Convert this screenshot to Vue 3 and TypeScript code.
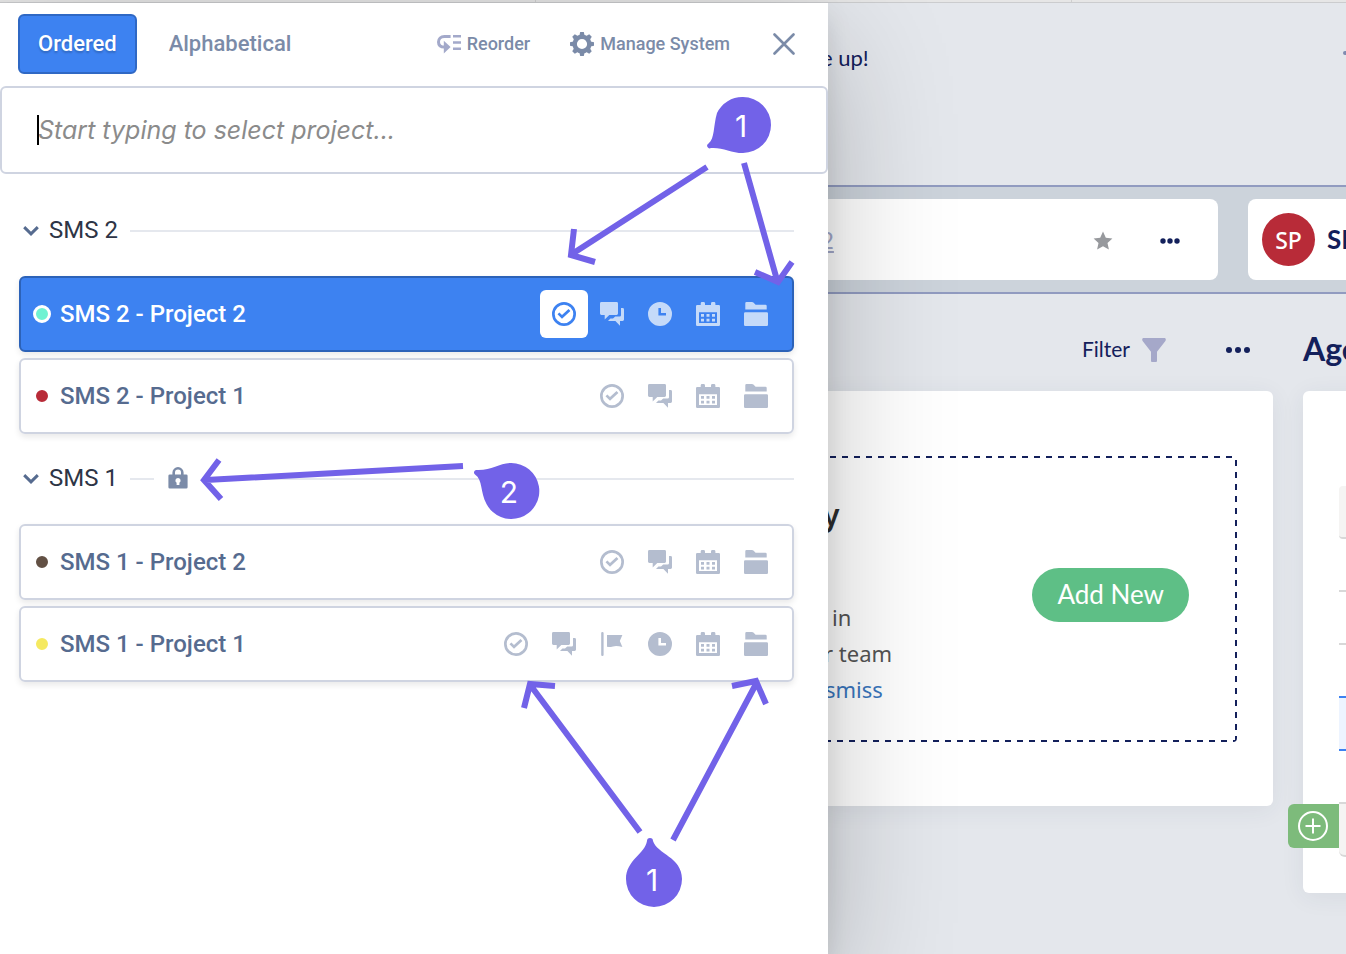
<script setup lang="ts">
import { ref } from 'vue'

type IconName = 'tasks' | 'chat' | 'flag' | 'clock' | 'calendar' | 'files'

interface Project {
  name: string
  tone: string
  active?: boolean
  tools: IconName[]
}

interface Group {
  name: string
  locked: boolean
  projects: Project[]
}

const search = ref('')

const groups: Group[] = [
  {
    name: 'SMS 2',
    locked: false,
    projects: [
      { name: 'SMS 2 - Project 2', tone: 'mint', active: true, tools: ['tasks', 'chat', 'clock', 'calendar', 'files'] },
      { name: 'SMS 2 - Project 1', tone: 'red', tools: ['tasks', 'chat', 'calendar', 'files'] },
    ],
  },
  {
    name: 'SMS 1',
    locked: true,
    projects: [
      { name: 'SMS 1 - Project 2', tone: 'brown', tools: ['tasks', 'chat', 'calendar', 'files'] },
      { name: 'SMS 1 - Project 1', tone: 'yellow', tools: ['tasks', 'chat', 'flag', 'clock', 'calendar', 'files'] },
    ],
  },
]

const iconPaths: Record<IconName, string> = {
  tasks:
    'M12 0a12 12 0 1 0 0 24a12 12 0 0 0 0-24zM12 2.7a9.3 9.3 0 1 1 0 18.6a9.3 9.3 0 0 1 0-18.6zM7.4 10.4L5.5 12.3L10 16.8L18.4 8.9L16.5 7L10 13z',
  chat:
    'M1.4 0H16.6Q18 0 18 1.4V11.6Q18 13 16.6 13H9.3L4.7 17.6V13H1.4Q0 13 0 11.6V1.4Q0 0 1.4 0zM21 6H22.6Q24 6 24 7.4V17.6Q24 19 22.6 19H20V23.8L15.4 19H8L10.4 16.6H13L15.2 14.6H19.6Q21 14.6 21 13.2z',
  flag: 'M1.2 1Q1.2 0 2.4 0Q3.6 0 3.6 1V23Q3.6 24 2.4 24Q1.2 24 1.2 23zM7 3H22.4L19.8 9L22.4 15Q17 13.6 13 14.4Q10 15.2 7 14.8z',
  clock: 'M12 0a12 12 0 1 0 0 24a12 12 0 0 0 0-24zM10.4 6H13V11H18V13.6H10.4z',
  calendar:
    'M1.2 3H4.7V1.4Q4.7 0 6 0H7.6Q9 0 9 1.4V3H15V1.4Q15 0 16.4 0H18Q19.4 0 19.4 1.4V3H22.8Q24 3 24 4.2V22.8Q24 24 22.8 24H1.2Q0 24 0 22.8V4.2Q0 3 1.2 3zM3 10.3V21H21V10.3zM5 12H8V14.8H5zM10.5 12H13.5V14.8H10.5zM16 12H19V14.8H16zM5 16.7H8V19.5H5zM10.5 16.7H13.5V19.5H10.5zM16 16.7H19V19.5H16z',
  files:
    'M1.3 7.6V1.2Q1.3 0 2.5 0H8Q8.8 0 9.4 .6L11.6 2.7H21.5Q22.7 2.7 22.7 3.9V7.6zM1.2 10.3H22.8Q24 10.3 24 11.5V22.8Q24 24 22.8 24H1.2Q0 24 0 22.8V11.5Q0 10.3 1.2 10.3z',
}

const toothAngles = [0, 45, 90, 135, 180, 225, 270, 315]
</script>

<template>
  <div class="screen">
    <div class="tabstrip"></div>
    <div class="body">
      <aside class="drawer">
        <header class="drawer-head">
          <button type="button" class="mode mode-on">Ordered</button>
          <button type="button" class="mode">Alphabetical</button>
          <div class="actions">
            <button type="button" class="action">
              <svg class="reorder" viewBox="0 0 24 20" width="24" height="20">
                <path d="M13.6 2.4H7.4C3.8 2.4 1.5 4.8 1.5 7.9C1.5 11 3.8 13 7.6 13" fill="none" stroke="currentColor" stroke-width="3" />
                <path d="M6.8 6.8L13.6 13L6.8 19.4z" fill="currentColor" />
                <path d="M16 1h8v2.6h-8zM16 7.2h8v2.6h-8zM16 13.4h8v2.6h-8z" fill="currentColor" />
              </svg>
              Reorder
            </button>
            <button type="button" class="action">
              <svg viewBox="-12 -12 24 24" width="24" height="24">
                <circle r="7.3" fill="none" stroke="currentColor" stroke-width="4.4" />
                <path v-for="a in toothAngles" :key="a" d="M-2.6 -8.6L-1.8 -12H1.8L2.6 -8.6z" :transform="`rotate(${a})`" fill="currentColor" />
              </svg>
              Manage System
            </button>
            <button type="button" class="close" aria-label="Close">
              <svg viewBox="0 0 22 22" width="22" height="22">
                <path d="M1.5 1.5L20.5 20.5M20.5 1.5L1.5 20.5" fill="none" stroke="currentColor" stroke-width="2.6" stroke-linecap="round" />
              </svg>
            </button>
          </div>
        </header>

        <div class="search">
          <input v-model="search" type="text" placeholder="Start typing to select project..." aria-label="Select project" />
          <span class="caret"></span>
        </div>

        <section v-for="group in groups" :key="group.name" class="group">
          <h2 class="group-head">
            <svg viewBox="0 0 16 10" width="16" height="10">
              <path d="M1.2 1.2L8 7.8L14.8 1.2" fill="none" stroke="#566b8f" stroke-width="3" />
            </svg>
            <span>{{ group.name }}</span>
            <template v-if="group.locked">
              <i class="rule rule-short"></i>
              <svg class="lock" viewBox="0 0 20 22" width="20" height="22">
                <path d="M5.7 9V5.6A4.3 4.3 0 0 1 14.3 5.6V9" fill="none" stroke="#7b8ba8" stroke-width="2.6" />
                <path fill-rule="evenodd" d="M1.8 7.4H18.2Q19.6 7.4 19.6 8.8V20.2Q19.6 21.6 18.2 21.6H1.8Q.4 21.6 .4 20.2V8.8Q.4 7.4 1.8 7.4zM10 11a2.6 2.6 0 0 0-1.4 4.8V18H11.4V15.8A2.6 2.6 0 0 0 10 11z" fill="#7b8ba8" />
              </svg>
            </template>
            <i class="rule"></i>
          </h2>
          <ul class="projects">
            <li v-for="project in group.projects" :key="project.name" class="project" :class="{ active: project.active }">
              <span class="dot" :class="project.tone"></span>
              <a href="#" class="name">{{ project.name }}</a>
              <span class="tools">
                <button v-for="tool in project.tools" :key="tool" type="button" class="tool" :aria-label="tool">
                  <svg viewBox="0 0 24 24" width="24" height="24">
                    <path :d="iconPaths[tool]" fill="currentColor" fill-rule="evenodd" />
                  </svg>
                </button>
              </span>
            </li>
          </ul>
        </section>

        <svg class="notes" viewBox="0 0 828 954" width="828" height="954">
          <g fill="none" stroke="#7262e8" stroke-width="6">
            <path d="M707 167L572 254M574 229L571 255L595 262" />
            <path d="M744 163L777 280M755 272L778 282L792 262" />
            <path d="M463 466L206 480M219 460L204 480L221 499" />
            <path d="M640 832L531 686M524 708L530 684L555 686" />
            <path d="M673 840L756 684M732 686L756 681L766 704" />
          </g>
          <g fill="#7262e8">
            <path d="M743 97A28 28 0 1 1 743 153C731 153 722 147 711 148A2.5 2.5 0 0 1 708.5 143.5C715 138 713 127 717 113A28 28 0 0 1 743 97z" />
            <path d="M511 463C499 463 491 471 476 470A2.5 2.5 0 0 0 475 474.5C483 480 480 492 486.5 504A28 28 0 1 0 511 463z" />
            <path d="M626 879C626 860 645 854 647 841A3 3 0 0 1 653 841C657 854 682 857 682 879A28 28 0 0 1 626 879z" />
          </g>
          <g class="note-text">
            <text x="741" y="137">1</text>
            <text x="509" y="503">2</text>
            <text x="652" y="891">1</text>
          </g>
        </svg>
      </aside>

      <main class="content">
        <div class="banner">
          <p>e up!</p>
          <svg viewBox="0 0 16 4" width="16" height="4"><path d="M2 2H14" stroke="#7f8bb0" stroke-width="4" stroke-linecap="round" /></svg>
        </div>

        <div class="band">
          <div class="crumb">
            <a href="#">2</a>
            <svg class="star" viewBox="0 0 20 20" width="20" height="20">
              <path d="M10 .6L12.8 6.8L19.4 7.5L14.5 12L15.9 18.6L10 15.2L4.1 18.6L5.5 12L.6 7.5L7.2 6.8z" fill="#97999d" />
            </svg>
            <button type="button" class="more" aria-label="More options">
              <svg viewBox="0 0 20 6" width="20" height="6"><circle cx="3" cy="3" r="2.7" /><circle cx="10" cy="3" r="2.7" /><circle cx="17" cy="3" r="2.7" /></svg>
            </button>
          </div>
          <div class="crumb crumb-next">
            <span class="avatar">SP</span>
            <strong>SM</strong>
          </div>
        </div>

        <div class="columns">
          <section class="column">
            <header class="column-head">
              <button type="button" class="filter">
                <span>Filter</span>
                <svg viewBox="0 0 24 24" width="24" height="24">
                  <path d="M1 0H23Q24.4 1 23.4 3L15 13.8V23Q15 24 14 24H10Q9 24 9 23V13.8L.6 3Q-.4 1 1 0z" fill="#a5a8c9" />
                </svg>
              </button>
              <button type="button" class="more" aria-label="More options">
                <svg viewBox="0 0 24 8" width="24" height="8"><circle cx="3" cy="4" r="3" /><circle cx="12" cy="4" r="3" /><circle cx="21" cy="4" r="3" /></svg>
              </button>
            </header>
            <div class="card card-main">
              <div class="dashed">
                <div class="intro">
                  <h3>y</h3>
                  <p class="line-in">in</p>
                  <p class="line-team">r team</p>
                  <a href="#">smiss</a>
                </div>
                <button type="button" class="add">Add New</button>
              </div>
            </div>
          </section>

          <section class="column column-next">
            <header class="column-head"><h2>Age</h2></header>
            <div class="card card-next">
              <div class="slots">
                <div class="slot slot-head"></div>
                <div class="slot"></div>
                <div class="slot"></div>
                <div class="slot slot-clear"></div>
                <div class="slot slot-on"></div>
                <div class="slot"></div>
                <div class="slot slot-foot"></div>
              </div>
              <button type="button" class="plus" aria-label="Add item">
                <svg viewBox="0 0 30 30" width="30" height="30">
                  <path d="M15 7.5V22.5M7.5 15H22.5" stroke="#fff" stroke-width="2" />
                  <circle cx="15" cy="15" r="14" fill="none" stroke="#fff" stroke-width="2" />
                </svg>
              </button>
            </div>
          </section>
        </div>
      </main>
    </div>
  </div>
</template>

<style>
body {
  margin: 0;
}
</style>

<style scoped>
* {
  box-sizing: border-box;
}
.screen {
  display: flex;
  flex-direction: column;
  min-height: 100vh;
  overflow: hidden;
  background: #e4e7ec;
  font-family: Roboto, "Liberation Sans", sans-serif;
}
h2,
h3,
p,
ul {
  margin: 0;
  padding: 0;
}
button {
  margin: 0;
  padding: 0;
  border: 0;
  background: none;
  font: inherit;
  color: inherit;
  cursor: pointer;
}
svg {
  display: block;
  flex: none;
}
.tabstrip {
  height: 3px;
  border-bottom: 1px solid #cbccce;
  background: repeating-linear-gradient(to right, #e6e6e6 0 535px, #cfcfcf 535px 536px);
}
.body {
  flex: 1;
  display: flex;
}

/* Drawer */
.drawer {
  position: relative;
  z-index: 2;
  flex: none;
  width: 828px;
  background: #fff;
  box-shadow: 0 40px 120px rgba(0, 0, 0, 0.24), 0 12px 24px rgba(0, 0, 0, 0.1);
}
.drawer-head {
  display: flex;
  align-items: center;
  height: 83px;
  padding: 0 32px 2px 18px;
  color: #7b8ba8;
}
.mode {
  height: 60px;
  padding: 0 18px;
  border: 2px solid transparent;
  border-radius: 6px;
  font-size: 22px;
  font-weight: 500;
}
.mode + .mode {
  margin-left: 12px;
}
.mode-on {
  border-color: #2f68c4;
  background: #3d82f1;
  color: #fff;
  text-shadow: 0 2px 2px rgba(0, 0, 0, 0.2);
}
.actions {
  display: flex;
  align-items: center;
  gap: 40px;
  margin-left: auto;
}
.action {
  display: flex;
  align-items: center;
  gap: 6px;
  font-size: 18px;
  font-weight: 500;
}
.reorder {
  color: #a3a9ca;
}
.close {
  padding: 1px 1px 1px 3px;
}
.search {
  position: relative;
}
.search input {
  display: block;
  width: 100%;
  height: 88px;
  padding: 0 36px;
  border: 2px solid #cfd4e1;
  border-radius: 6px;
  outline: 0;
  background: #fff;
  font: italic 25px Inter, "Liberation Sans", sans-serif;
}
.search input::placeholder {
  color: #8b8b8b;
  opacity: 1;
}
.caret {
  position: absolute;
  left: 37px;
  top: 29px;
  width: 2px;
  height: 30px;
  background: #000;
}
.group {
  padding: 0 34px 0 19px;
}
.search + .group {
  margin-top: 12px;
}
.group-head {
  display: flex;
  align-items: center;
  height: 90px;
  padding-left: 4px;
  font-size: 24px;
  font-weight: 400;
  color: #2e3546;
}
.group-head span {
  margin: 0 12px 2px 10px;
}
.rule {
  flex: 1;
  height: 2px;
  background: #e5e8ee;
}
.rule-short {
  flex: none;
  width: 24px;
}
.lock {
  margin: 0 14px 2px;
}
.projects {
  display: grid;
  gap: 6px;
  list-style: none;
}
.project {
  display: flex;
  align-items: center;
  height: 76px;
  padding: 0 12px;
  border: 2px solid #cfd4e1;
  border-radius: 6px;
  box-shadow: 0 3px 6px rgba(0, 0, 0, 0.09);
  color: #566b8f;
}
.name {
  margin-left: 9px;
  color: inherit;
  font-size: 24px;
  font-weight: 500;
  text-decoration: none;
}
.dot {
  width: 18px;
  height: 18px;
  border: 3px solid #fff;
  border-radius: 50%;
}
.mint {
  background: #6ff2d2;
}
.red {
  background: #b82b38;
}
.brown {
  background: #625044;
}
.yellow {
  background: #f5e960;
}
.tools {
  display: flex;
  margin-left: auto;
  color: #b4bdcf;
}
.tool {
  display: grid;
  place-items: center;
  width: 48px;
  height: 48px;
  border-radius: 6px;
}
.active {
  border-color: #2c62b8;
  background: #3d82f1;
  color: #fff;
}
.active .tools {
  color: #c5daf9;
}
.active .tool:first-child {
  background: #fff;
  color: #3d82f1;
}
.notes {
  position: absolute;
  left: 0;
  top: -3px;
  pointer-events: none;
}
.note-text {
  fill: #fff;
  font: 30px Inter, "Liberation Sans", sans-serif;
  text-anchor: middle;
}

/* Page behind the drawer */
.content {
  flex: 1;
  min-width: 0;
  margin-left: -8px;
  color: #13205b;
  font-family: Lato, "Liberation Sans", sans-serif;
}
.banner {
  display: flex;
  justify-content: space-between;
  height: 182px;
  padding: 41px 0 0 1px;
  font-size: 22px;
  line-height: 28px;
}
.banner svg {
  margin: 7px -13px 0 0;
}
.band {
  display: flex;
  gap: 30px;
  padding: 12px 0;
  border: solid #919bc0;
  border-width: 2px 0;
  background: #ccd3db;
}
.crumb {
  flex: none;
  display: flex;
  align-items: center;
  width: 398px;
  height: 81px;
  border-radius: 8px;
  background: #fff;
}
.crumb a {
  color: #a3a9ca;
  font-size: 24px;
}
.star {
  margin: 3px 47px 0 auto;
}
.more {
  fill: #13205b;
}
.crumb .more {
  margin: 3px 38px 0 0;
}
.crumb-next {
  flex: 1 0 140px;
  padding-left: 14px;
  border-radius: 8px 0 0 8px;
}
.avatar {
  display: grid;
  place-items: center;
  width: 53px;
  height: 53px;
  margin-right: 12px;
  border-radius: 50%;
  background: #b82b38;
  color: #fff;
  font: 500 23px "Noto Sans", sans-serif;
}
.crumb strong {
  padding-bottom: 2px;
  font-size: 26px;
}
.columns {
  display: flex;
  gap: 30px;
}
.column {
  flex: none;
  width: 453px;
}
.column-next {
  flex: 1 0 100px;
}
.column-head {
  display: flex;
  align-items: center;
  justify-content: flex-end;
  height: 97px;
  padding: 15px 23px 0 0;
}
.column-next .column-head {
  justify-content: flex-start;
}
.column-head h2 {
  padding-bottom: 4px;
  font-size: 32px;
  font-weight: 700;
}
.filter {
  display: flex;
  align-items: center;
  gap: 12px;
  margin-right: 60px;
  font-size: 21px;
}
.filter span {
  padding-bottom: 4px;
}
.card {
  border-radius: 6px;
  background: #fff;
  box-shadow: 0 4px 24px rgba(40, 60, 90, 0.07);
}
.card-main {
  padding: 65px 36px 64px 0;
}
.dashed {
  display: flex;
  align-items: center;
  justify-content: space-between;
  height: 286px;
  padding-right: 48px;
  border-radius: 4px;
  background:
    repeating-linear-gradient(to left, transparent 0 5px, #13205b 5px 11px, transparent 11px 12px) top / 100% 2px no-repeat,
    repeating-linear-gradient(to left, transparent 0 8px, #13205b 8px 14px, transparent 14px 12px) bottom / 0 0 no-repeat,
    repeating-linear-gradient(to left, #13205b 0 4px, transparent 4px 10px, #13205b 10px 12px) bottom / 100% 2px no-repeat,
    repeating-linear-gradient(to bottom, transparent 0 4px, #13205b 4px 10px, transparent 10px 12px) right / 2px 100% no-repeat;
}
.intro {
  align-self: stretch;
  padding-top: 39px;
  color: #555;
  font: 22px/36px "Noto Sans", sans-serif;
}
.intro h3 {
  padding-left: 3px;
  color: #2d2d2d;
  font: 600 30px/40px "Noto Sans", sans-serif;
}
.intro .line-in {
  margin-top: 64px;
  padding-left: 12px;
}
.intro .line-team {
  padding-left: 4px;
}
.intro a {
  padding-left: 5px;
  color: #3a76bd;
  text-decoration: none;
}
.add {
  height: 54px;
  padding: 0 25px 2px;
  margin-top: -8px;
  border-radius: 27px;
  background: #5ebf86;
  color: #fff;
  font-size: 26px;
}
.card-next {
  position: relative;
  padding: 95px 0 36px 36px;
}
.slot {
  height: 53px;
  border-bottom: 2px solid #d8d8d8;
}
.slot-head {
  border-radius: 4px 0 0 4px;
  background: #f5f4f3;
}
.slot-clear {
  border-bottom-color: transparent;
}
.slot-on {
  margin-top: -2px;
  height: 55px;
  border: solid #3d82f1;
  border-width: 2px 0;
  background: #edf4ff;
}
.slot-foot {
  border-radius: 0 0 0 6px;
  background: #f5f4f3;
}
.plus {
  position: absolute;
  left: -15px;
  bottom: 45px;
  display: grid;
  place-items: center;
  width: 51px;
  height: 44px;
  padding-right: 1px;
  border-radius: 6px 0 0 6px;
  background: #7dbb7b;
}
</style>
